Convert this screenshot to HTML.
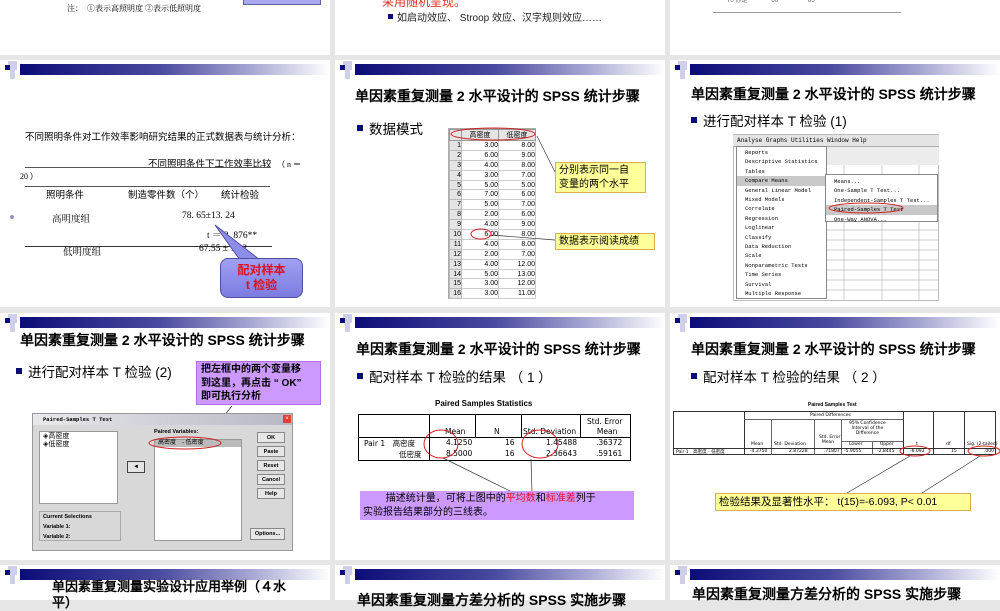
<!DOCTYPE html>
<html><head><meta charset="utf-8"><style>
*{margin:0;padding:0;box-sizing:border-box}
body{width:1000px;height:600px;background:#e6e6e6;position:relative;overflow:hidden;font-family:"Liberation Sans","Noto Sans CJK SC",sans-serif;color:#000}
.a{position:absolute;white-space:nowrap}
.sl{position:absolute;background:#fff;overflow:hidden}
.bar{position:absolute;height:11px;width:310px;background:linear-gradient(90deg,#0c0c78,#4a4aa0 45%,#a8a8d4 75%,#fff)}
.sq1{position:absolute;width:5px;height:5px;background:#0c0c78}
.sq2{position:absolute;width:9px;height:9px;background:#cfcfea}
.t{font-weight:bold;font-size:14px;font-family:"Liberation Sans","WenQuanYi Zen Hei",sans-serif}
.b{font-size:13.5px}
.b:before{content:"";display:inline-block;width:6px;height:6px;background:#0c0c78;margin-right:6px;vertical-align:3px}
.box{position:absolute}
table{border-collapse:collapse}
</style></head><body>

<div class="sl" style="left:0;top:0;width:330px;height:55px"></div>
<div class="sl" style="left:335px;top:0;width:330px;height:55px"></div>
<div class="sl" style="left:670px;top:0;width:330px;height:55px"></div>
<div class="sl" style="left:0;top:60px;width:330px;height:247px"></div>
<div class="sl" style="left:335px;top:60px;width:330px;height:247px"></div>
<div class="sl" style="left:670px;top:60px;width:330px;height:247px"></div>
<div class="sl" style="left:0;top:313px;width:330px;height:247px"></div>
<div class="sl" style="left:335px;top:313px;width:330px;height:247px"></div>
<div class="sl" style="left:670px;top:313px;width:330px;height:247px"></div>
<div class="sl" style="left:0;top:565px;width:330px;height:35px"></div>
<div class="sl" style="left:335px;top:565px;width:330px;height:35px"></div>
<div class="sl" style="left:670px;top:565px;width:330px;height:35px"></div>

<div class="sq2" style="left:8px;top:61px"></div><div class="sq2" style="left:10px;top:70px;width:5px;height:9px"></div><div class="sq1" style="left:5px;top:65px"></div><div class="bar" style="left:20px;top:64px"></div>
<div class="sq2" style="left:343px;top:61px"></div><div class="sq2" style="left:345px;top:70px;width:5px;height:9px"></div><div class="sq1" style="left:340px;top:65px"></div><div class="bar" style="left:355px;top:64px"></div>
<div class="sq2" style="left:678px;top:61px"></div><div class="sq2" style="left:680px;top:70px;width:5px;height:9px"></div><div class="sq1" style="left:675px;top:65px"></div><div class="bar" style="left:690px;top:64px"></div>

<div class="sq2" style="left:8px;top:314px"></div><div class="sq2" style="left:10px;top:323px;width:5px;height:9px"></div><div class="sq1" style="left:5px;top:318px"></div><div class="bar" style="left:20px;top:317px"></div>
<div class="sq2" style="left:343px;top:314px"></div><div class="sq2" style="left:345px;top:323px;width:5px;height:9px"></div><div class="sq1" style="left:340px;top:318px"></div><div class="bar" style="left:355px;top:317px"></div>
<div class="sq2" style="left:678px;top:314px"></div><div class="sq2" style="left:680px;top:323px;width:5px;height:9px"></div><div class="sq1" style="left:675px;top:318px"></div><div class="bar" style="left:690px;top:317px"></div>

<div class="sq2" style="left:8px;top:566px"></div><div class="sq2" style="left:10px;top:575px;width:5px;height:9px"></div><div class="sq1" style="left:5px;top:570px"></div><div class="bar" style="left:20px;top:569px"></div>
<div class="sq2" style="left:343px;top:566px"></div><div class="sq2" style="left:345px;top:575px;width:5px;height:9px"></div><div class="sq1" style="left:340px;top:570px"></div><div class="bar" style="left:355px;top:569px"></div>
<div class="sq2" style="left:678px;top:566px"></div><div class="sq2" style="left:680px;top:575px;width:5px;height:9px"></div><div class="sq1" style="left:675px;top:570px"></div><div class="bar" style="left:690px;top:569px"></div>

<div class="a" style="left:67px;top:3px;font-size:8px;font-family:'Liberation Serif','Noto Serif CJK SC',serif">注：　①表示高照明度 ②表示低照明度</div>
<div class="box" style="left:243px;top:-4px;width:78px;height:9px;background:#a8a8f0;border:1px solid #6060a0"></div>
<div class="a" style="left:382px;top:-7px;font-size:12px;color:#e03020">采用随机呈现。</div>
<div class="a" style="left:388px;top:9px;font-size:10px;color:#222"><span style="display:inline-block;width:5px;height:5px;background:#0c0c78;margin-right:4px;vertical-align:2px"></span>如启动效应、 Stroop 效应、汉字规则效应……</div>
<div class="a" style="left:727px;top:-5px;font-size:6px;color:#666">70 你是　　　　60　　　　　85</div>
<div class="box" style="left:713px;top:12px;width:188px;height:1px;background:#999"></div>

<div class="a" style="left:25px;top:129px;font-size:9.5px">不同照明条件对工作效率影响研究结果的正式数据表与统计分析：</div>
<div class="a" style="left:148px;top:156px;font-size:9.5px">不同照明条件下工作效率比较　<span style="font-family:'Liberation Serif',serif;font-size:8px">（ n ＝</span></div>
<div class="box" style="left:25px;top:167px;width:245px;height:1px;background:#555"></div>
<div class="a" style="left:20px;top:171px;font-size:8px;font-family:'Liberation Serif',serif">20 ）</div>
<div class="box" style="left:25px;top:186px;width:245px;height:1px;background:#555"></div>
<div class="a" style="left:46px;top:187px;font-size:9.5px">照明条件</div>
<div class="a" style="left:128px;top:187px;font-size:9.5px">制造零件数（个）</div>
<div class="a" style="left:221px;top:187px;font-size:9.5px">统计检验</div>
<div class="box" style="left:10px;top:215px;width:4px;height:4px;border-radius:2px;background:#9090c8"></div>
<div class="a" style="left:52px;top:211px;font-size:9.5px;font-family:'Liberation Serif','Noto Serif CJK SC',serif">高明度组</div>
<div class="a" style="left:182px;top:211px;font-size:9.5px;font-family:'Liberation Serif','Noto Serif CJK SC',serif">78. 65±13. 24</div>
<div class="a" style="left:207px;top:227px;font-size:9.5px;font-family:'Liberation Serif','Noto Serif CJK SC',serif">t ＝ 2. 876**</div>
<div class="box" style="left:25px;top:246px;width:247px;height:1px;background:#333"></div>
<div class="a" style="left:63px;top:244px;font-size:9.5px;font-family:'Liberation Serif','Noto Serif CJK SC',serif">低明度组</div>
<div class="a" style="left:199px;top:244px;font-size:9.5px;font-family:'Liberation Serif','Noto Serif CJK SC',serif">67.55 ± 12.2</div>
<svg class="a" style="left:0;top:0" width="330" height="307"><polygon points="215,225 240,260 260,260" fill="#8e8ee8" stroke="#5050a0" stroke-width="1"/></svg>
<div class="box" style="left:220px;top:258px;width:83px;height:40px;border-radius:8px;background:linear-gradient(#a0a0f4,#7c7ce0);border:1px solid #5050a0;color:#e01020;font-weight:bold;font-size:12px;text-align:center;line-height:15px;padding-top:4px">配对样本<br>t 检验</div>

<div class="a t" style="left:355px;top:86px">单因素重复测量 2 水平设计的 SPSS 统计步骤</div>
<div class="a b" style="left:357px;top:118px">数据模式</div>
<div class="box" style="left:448px;top:128px;width:88px;height:171px;background:#fff;border:1px solid #aaa;font-size:7px">
<table style="width:87px;font-size:7px;font-family:'Liberation Sans','Noto Sans CJK SC',sans-serif">
<tr style="height:11px;background:#e4e4e4"><td style="width:12px;border:1px solid #999"></td><td style="border:1px solid #999;text-align:center">高密度</td><td style="border:1px solid #999;text-align:center">低密度</td></tr>
<tr style="height:9.9px"><td style="background:#e4e4e4;border:1px solid #bbb;text-align:right">1</td><td style="border:1px solid #ccc;text-align:right">3.00</td><td style="border:1px solid #ccc;text-align:right">8.00</td></tr>
<tr style="height:9.9px"><td style="background:#e4e4e4;border:1px solid #bbb;text-align:right">2</td><td style="border:1px solid #ccc;text-align:right">6.00</td><td style="border:1px solid #ccc;text-align:right">9.00</td></tr>
<tr style="height:9.9px"><td style="background:#e4e4e4;border:1px solid #bbb;text-align:right">3</td><td style="border:1px solid #ccc;text-align:right">4.00</td><td style="border:1px solid #ccc;text-align:right">8.00</td></tr>
<tr style="height:9.9px"><td style="background:#e4e4e4;border:1px solid #bbb;text-align:right">4</td><td style="border:1px solid #ccc;text-align:right">3.00</td><td style="border:1px solid #ccc;text-align:right">7.00</td></tr>
<tr style="height:9.9px"><td style="background:#e4e4e4;border:1px solid #bbb;text-align:right">5</td><td style="border:1px solid #ccc;text-align:right">5.00</td><td style="border:1px solid #ccc;text-align:right">5.00</td></tr>
<tr style="height:9.9px"><td style="background:#e4e4e4;border:1px solid #bbb;text-align:right">6</td><td style="border:1px solid #ccc;text-align:right">7.00</td><td style="border:1px solid #ccc;text-align:right">6.00</td></tr>
<tr style="height:9.9px"><td style="background:#e4e4e4;border:1px solid #bbb;text-align:right">7</td><td style="border:1px solid #ccc;text-align:right">5.00</td><td style="border:1px solid #ccc;text-align:right">7.00</td></tr>
<tr style="height:9.9px"><td style="background:#e4e4e4;border:1px solid #bbb;text-align:right">8</td><td style="border:1px solid #ccc;text-align:right">2.00</td><td style="border:1px solid #ccc;text-align:right">6.00</td></tr>
<tr style="height:9.9px"><td style="background:#e4e4e4;border:1px solid #bbb;text-align:right">9</td><td style="border:1px solid #ccc;text-align:right">4.00</td><td style="border:1px solid #ccc;text-align:right">9.00</td></tr>
<tr style="height:9.9px"><td style="background:#e4e4e4;border:1px solid #bbb;text-align:right">10</td><td style="border:1px solid #ccc;text-align:right">6.00</td><td style="border:1px solid #ccc;text-align:right">8.00</td></tr>
<tr style="height:9.9px"><td style="background:#e4e4e4;border:1px solid #bbb;text-align:right">11</td><td style="border:1px solid #ccc;text-align:right">4.00</td><td style="border:1px solid #ccc;text-align:right">8.00</td></tr>
<tr style="height:9.9px"><td style="background:#e4e4e4;border:1px solid #bbb;text-align:right">12</td><td style="border:1px solid #ccc;text-align:right">2.00</td><td style="border:1px solid #ccc;text-align:right">7.00</td></tr>
<tr style="height:9.9px"><td style="background:#e4e4e4;border:1px solid #bbb;text-align:right">13</td><td style="border:1px solid #ccc;text-align:right">4.00</td><td style="border:1px solid #ccc;text-align:right">12.00</td></tr>
<tr style="height:9.9px"><td style="background:#e4e4e4;border:1px solid #bbb;text-align:right">14</td><td style="border:1px solid #ccc;text-align:right">5.00</td><td style="border:1px solid #ccc;text-align:right">13.00</td></tr>
<tr style="height:9.9px"><td style="background:#e4e4e4;border:1px solid #bbb;text-align:right">15</td><td style="border:1px solid #ccc;text-align:right">3.00</td><td style="border:1px solid #ccc;text-align:right">12.00</td></tr>
<tr style="height:9.9px"><td style="background:#e4e4e4;border:1px solid #bbb;text-align:right">16</td><td style="border:1px solid #ccc;text-align:right">3.00</td><td style="border:1px solid #ccc;text-align:right">11.00</td></tr>
</table></div>
<svg class="a" style="left:335px;top:60px" width="330" height="247">
<ellipse cx="158" cy="74" rx="42" ry="6" fill="none" stroke="#d02020" stroke-width="1"/>
<ellipse cx="146" cy="174" rx="10" ry="5" fill="none" stroke="#d02020" stroke-width="1"/>
<line x1="202" y1="76" x2="220" y2="112" stroke="#333" stroke-width="0.7"/>
<line x1="156" y1="175" x2="220" y2="180" stroke="#333" stroke-width="0.7"/>
</svg>
<div class="box" style="left:555px;top:162px;width:91px;height:31px;background:#ffff99;border:1px solid #d8b050;font-size:10px;line-height:14px;padding:1px 3px">分别表示同一自<br>变量的两个水平</div>
<div class="box" style="left:555px;top:233px;width:100px;height:17px;background:#ffff99;border:1px solid #d8b050;font-size:10px;line-height:15px;padding:0 3px">数据表示阅读成绩</div>

<div class="a t" style="left:691px;top:84px">单因素重复测量 2 水平设计的 SPSS 统计步骤</div>
<div class="a b" style="left:691px;top:110px">进行配对样本 T 检验 (1)</div>
<div class="box" style="left:733px;top:134px;width:206px;height:167px;background:#fff;border:1px solid #bbb"></div>
<div class="box" style="left:733px;top:135px;width:206px;height:12px;background:#e4e4e4;border-bottom:1px solid #aaa;font-size:6px;font-family:'Liberation Mono',monospace;line-height:12px;padding-left:4px;white-space:nowrap">Analyse Graphs Utilities Window Help</div>
<div class="box" style="left:826px;top:147px;width:113px;height:18px;background:#ececec"></div>
<svg class="a" style="left:826px;top:165px" width="113" height="135"><g stroke="#bbb" stroke-width="0.7"><line x1="0" y1="45" x2="113" y2="45"/><line x1="0" y1="55" x2="113" y2="55"/><line x1="0" y1="65" x2="113" y2="65"/><line x1="0" y1="75" x2="113" y2="75"/><line x1="0" y1="85" x2="113" y2="85"/><line x1="0" y1="95" x2="113" y2="95"/><line x1="0" y1="105" x2="113" y2="105"/><line x1="0" y1="115" x2="113" y2="115"/><line x1="0" y1="125" x2="113" y2="125"/><line x1="18" y1="0" x2="18" y2="135"/><line x1="56" y1="0" x2="56" y2="135"/><line x1="93" y1="0" x2="93" y2="135"/></g></svg>
<div class="box" style="left:736px;top:146px;width:91px;height:153px;background:#fff;border:1px solid #888;font-size:5.5px;font-family:'Liberation Mono',monospace;line-height:9.4px;padding:1px 0 0 0">
<div style="padding-left:8px">Reports</div><div style="padding-left:8px">Descriptive Statistics</div><div style="padding-left:8px">Tables</div><div style="padding-left:8px;background:#c8c8c8">Compare Means</div><div style="padding-left:8px">General Linear Model</div><div style="padding-left:8px">Mixed Models</div><div style="padding-left:8px">Correlate</div><div style="padding-left:8px">Regression</div><div style="padding-left:8px">Loglinear</div><div style="padding-left:8px">Classify</div><div style="padding-left:8px">Data Reduction</div><div style="padding-left:8px">Scale</div><div style="padding-left:8px">Nonparametric Tests</div><div style="padding-left:8px">Time Series</div><div style="padding-left:8px">Survival</div><div style="padding-left:8px">Multiple Response</div></div>
<div class="box" style="left:825px;top:174px;width:113px;height:48px;background:#fff;border:1px solid #888;font-size:5.5px;font-family:'Liberation Mono',monospace;line-height:9.4px;padding-top:2px">
<div style="padding-left:8px">Means...</div><div style="padding-left:8px">One-Sample T Test...</div><div style="padding-left:8px">Independent-Samples T Test...</div><div style="padding-left:8px;background:#c8c8c8">Paired-Samples T Test</div><div style="padding-left:8px">One-Way ANOVA...</div></div>
<svg class="a" style="left:825px;top:200px" width="80" height="16"><ellipse cx="41" cy="8" rx="37" ry="5" fill="none" stroke="#d02020" stroke-width="1"/></svg>

<div class="a t" style="left:20px;top:330px">单因素重复测量 2 水平设计的 SPSS 统计步骤</div>
<div class="a b" style="left:16px;top:361px">进行配对样本 T 检验 (2)</div>
<div class="box" style="left:196px;top:361px;width:125px;height:44px;background:#cc99ff;border:1px solid #b070e8;font-size:10px;font-weight:bold;line-height:13.5px;padding:1px 4px">把左框中的两个变量移<br>到这里，再点击 “ OK”<br>即可执行分析</div>
<svg class="a" style="left:0;top:313px" width="330" height="247"><line x1="232" y1="93" x2="212" y2="118" stroke="#333" stroke-width="0.7"/></svg>
<div class="box" style="left:32px;top:413px;width:261px;height:138px;background:#d8d8d8;border:1px solid #999"></div>
<div class="box" style="left:33px;top:414px;width:259px;height:11px;background:linear-gradient(90deg,#e8e8ec,#b8b8c4);font-size:5.5px;font-weight:bold;line-height:11px;padding-left:10px;font-family:'Liberation Mono',monospace">Paired-Samples T Test</div>
<div class="box" style="left:283px;top:415px;width:8px;height:8px;background:#e04030;color:#fff;font-size:6px;line-height:8px;text-align:center">×</div>
<div class="box" style="left:39px;top:431px;width:79px;height:73px;background:#fff;border:1px solid #999;font-size:7px;line-height:8px;padding:1px 3px">◈高密度<br>◈低密度</div>
<div class="box" style="left:127px;top:461px;width:18px;height:12px;background:#e4e4e4;border:1px solid #444;font-size:6px;text-align:center;line-height:10px">◄</div>
<div class="a" style="left:154px;top:429px;font-size:5.5px;font-weight:bold">Paired Variables:</div>
<div class="box" style="left:154px;top:439px;width:88px;height:102px;background:#fff;border:1px solid #999"></div>
<div class="box" style="left:155px;top:440px;width:86px;height:7px;background:#bbb;font-size:6px;line-height:7px;padding-left:3px">高密度　- 低密度</div>
<svg class="a" style="left:145px;top:434px" width="90" height="18"><ellipse cx="40" cy="9" rx="36" ry="6" fill="none" stroke="#d02020" stroke-width="1"/></svg>
<div class="box" style="left:257px;top:432px;width:28px;height:11px;background:#e6e6e6;border:1px solid #888;font-size:5.5px;font-weight:bold;text-align:center;line-height:10px">OK</div>
<div class="box" style="left:257px;top:446px;width:28px;height:11px;background:#e6e6e6;border:1px solid #888;font-size:5.5px;font-weight:bold;text-align:center;line-height:10px">Paste</div>
<div class="box" style="left:257px;top:460px;width:28px;height:11px;background:#e6e6e6;border:1px solid #888;font-size:5.5px;font-weight:bold;text-align:center;line-height:10px">Reset</div>
<div class="box" style="left:257px;top:474px;width:28px;height:11px;background:#e6e6e6;border:1px solid #888;font-size:5.5px;font-weight:bold;text-align:center;line-height:10px">Cancel</div>
<div class="box" style="left:257px;top:488px;width:28px;height:11px;background:#e6e6e6;border:1px solid #888;font-size:5.5px;font-weight:bold;text-align:center;line-height:10px">Help</div>
<div class="box" style="left:250px;top:528px;width:35px;height:12px;background:#e6e6e6;border:1px solid #888;font-size:5.5px;font-weight:bold;text-align:center;line-height:11px">Options...</div>
<div class="box" style="left:39px;top:511px;width:82px;height:30px;border:1px solid #aaa;font-size:5.5px;font-weight:bold;line-height:10px;padding-left:3px">Current Selections<br>Variable 1:<br>Variable 2:</div>

<div class="a t" style="left:356px;top:339px">单因素重复测量 2 水平设计的 SPSS 统计步骤</div>
<div class="a b" style="left:357px;top:366px">配对样本 T 检验的结果 （ 1 ）</div>
<div class="a" style="left:435px;top:399px;font-size:8px;font-weight:bold">Paired Samples Statistics</div>
<div class="box" style="left:358px;top:414px;width:273px;height:47px;border:1px solid #000;font-size:7.5px;font-family:'DejaVu Sans','Noto Sans CJK SC',sans-serif">
<div class="box" style="left:70px;top:0;width:1px;height:46px;background:#000"></div>
<div class="box" style="left:116px;top:0;width:1px;height:22px;background:#000"></div>
<div class="box" style="left:162px;top:0;width:1px;height:22px;background:#000"></div>
<div class="box" style="left:221px;top:0;width:1px;height:22px;background:#000"></div>
<div class="box" style="left:0;top:22px;width:272px;height:1px;background:#000"></div>
<div class="a" style="left:86px;top:12px">Mean</div><div class="a" style="left:135px;top:12px">N</div><div class="a" style="left:164px;top:12px">Std. Deviation</div><div class="a" style="left:228px;top:2px;text-align:center;line-height:10px">Std. Error<br>&nbsp;&nbsp;Mean</div>
<div class="a" style="left:5px;top:23px">Pair 1　高密度</div><div class="a" style="left:40px;top:34px">低密度</div>
<div class="a" style="left:87px;top:23px">4.1250</div><div class="a" style="left:87px;top:34px">8.5000</div>
<div class="a" style="left:146px;top:23px">16</div><div class="a" style="left:146px;top:34px">16</div>
<div class="a" style="left:187px;top:23px">1.45488</div><div class="a" style="left:187px;top:34px">2.36643</div>
<div class="a" style="left:237px;top:23px">.36372</div><div class="a" style="left:237px;top:34px">.59161</div>
</div>
<svg class="a" style="left:335px;top:313px" width="330" height="247">
<ellipse cx="106" cy="131" rx="17" ry="14" fill="none" stroke="#d02020" stroke-width="1"/>
<ellipse cx="205" cy="131" rx="18" ry="14" fill="none" stroke="#d02020" stroke-width="1"/>
<line x1="108" y1="145" x2="177" y2="179" stroke="#333" stroke-width="0.7"/>
<line x1="196" y1="146" x2="197" y2="179" stroke="#333" stroke-width="0.7"/>
</svg>
<div class="box" style="left:360px;top:491px;width:274px;height:29px;background:#cc99ff;font-size:10px;line-height:14px;padding:1px 3px">　　 描述统计量，可将上图中的<span style="color:#e01030">平均数</span>和<span style="color:#e01030">标准差</span>列于<br>实验报告结果部分的三线表。</div>

<div class="a t" style="left:691px;top:339px">单因素重复测量 2 水平设计的 SPSS 统计步骤</div>
<div class="a b" style="left:691px;top:366px">配对样本 T 检验的结果 （ 2 ）</div>
<div class="a" style="left:808px;top:402px;font-size:5px;font-weight:bold">Paired Samples Test</div>
<div class="box" style="left:673px;top:411px;width:323px;height:44px;border:1px solid #333;font-size:4.5px;font-family:'DejaVu Sans',sans-serif">
<div class="box" style="left:70px;top:0;width:1px;height:43px;background:#333"></div>
<div class="box" style="left:70px;top:7px;width:159px;height:1px;background:#666"></div>
<div class="box" style="left:229px;top:0;width:1px;height:43px;background:#333"></div>
<div class="box" style="left:259px;top:0;width:1px;height:43px;background:#333"></div>
<div class="box" style="left:290px;top:0;width:1px;height:43px;background:#333"></div>
<div class="box" style="left:97px;top:7px;width:1px;height:36px;background:#666"></div>
<div class="box" style="left:140px;top:7px;width:1px;height:36px;background:#666"></div>
<div class="box" style="left:167px;top:7px;width:1px;height:36px;background:#666"></div>
<div class="box" style="left:198px;top:29px;width:1px;height:14px;background:#666"></div>
<div class="box" style="left:167px;top:29px;width:62px;height:1px;background:#666"></div>
<div class="box" style="left:0;top:36px;width:322px;height:1px;background:#333"></div>
<div class="a" style="left:136px;top:1px">Paired Differences</div>
<div class="a" style="left:175px;top:9px;line-height:5px;text-align:center">95% Confidence<br>Interval of the<br>Difference</div>
<div class="a" style="left:145px;top:23px;line-height:5px">Std. Error<br>&nbsp;&nbsp;Mean</div>
<div class="a" style="left:77px;top:30px">Mean</div><div class="a" style="left:100px;top:30px">Std. Deviation</div><div class="a" style="left:175px;top:30px">Lower</div><div class="a" style="left:206px;top:30px">Upper</div><div class="a" style="left:242px;top:30px">t</div><div class="a" style="left:272px;top:30px">df</div><div class="a" style="left:293px;top:30px">Sig. (2-tailed)</div>
<div class="a" style="left:2px;top:37px">Pair 1　高密度 - 低密度</div><div class="a" style="left:76px;top:37px">-4.3750</div><div class="a" style="left:115px;top:37px">2.87228</div><div class="a" style="left:150px;top:37px">.71807</div><div class="a" style="left:170px;top:37px">-5.9055</div><div class="a" style="left:203px;top:37px">-2.8445</div><div class="a" style="left:236px;top:37px">-6.093</div><div class="a" style="left:277px;top:37px">15</div><div class="a" style="left:310px;top:37px">.000</div>
</div>
<svg class="a" style="left:670px;top:313px" width="330" height="247">
<ellipse cx="245" cy="138" rx="15" ry="5" fill="none" stroke="#d02020" stroke-width="1"/>
<ellipse cx="314" cy="138" rx="16" ry="5" fill="none" stroke="#d02020" stroke-width="1"/>
<line x1="240" y1="143" x2="177" y2="180" stroke="#333" stroke-width="0.7"/>
<line x1="310" y1="143" x2="252" y2="180" stroke="#333" stroke-width="0.7"/>
</svg>
<div class="box" style="left:715px;top:493px;width:256px;height:18px;background:#ffff99;border:1px solid #d8b050;font-size:10.5px;line-height:16px;padding-left:3px">检验结果及显著性水平： t(15)=-6.093, P&lt; 0.01</div>

<div class="a t" style="left:52px;top:579px;font-size:13px;line-height:16px">单因素重复测量实验设计应用举例（４水<br>平）</div>
<div class="a t" style="left:357px;top:590px">单因素重复测量方差分析的 SPSS 实施步骤</div>
<div class="a t" style="left:692px;top:584px">单因素重复测量方差分析的 SPSS 实施步骤</div>
</body></html>
